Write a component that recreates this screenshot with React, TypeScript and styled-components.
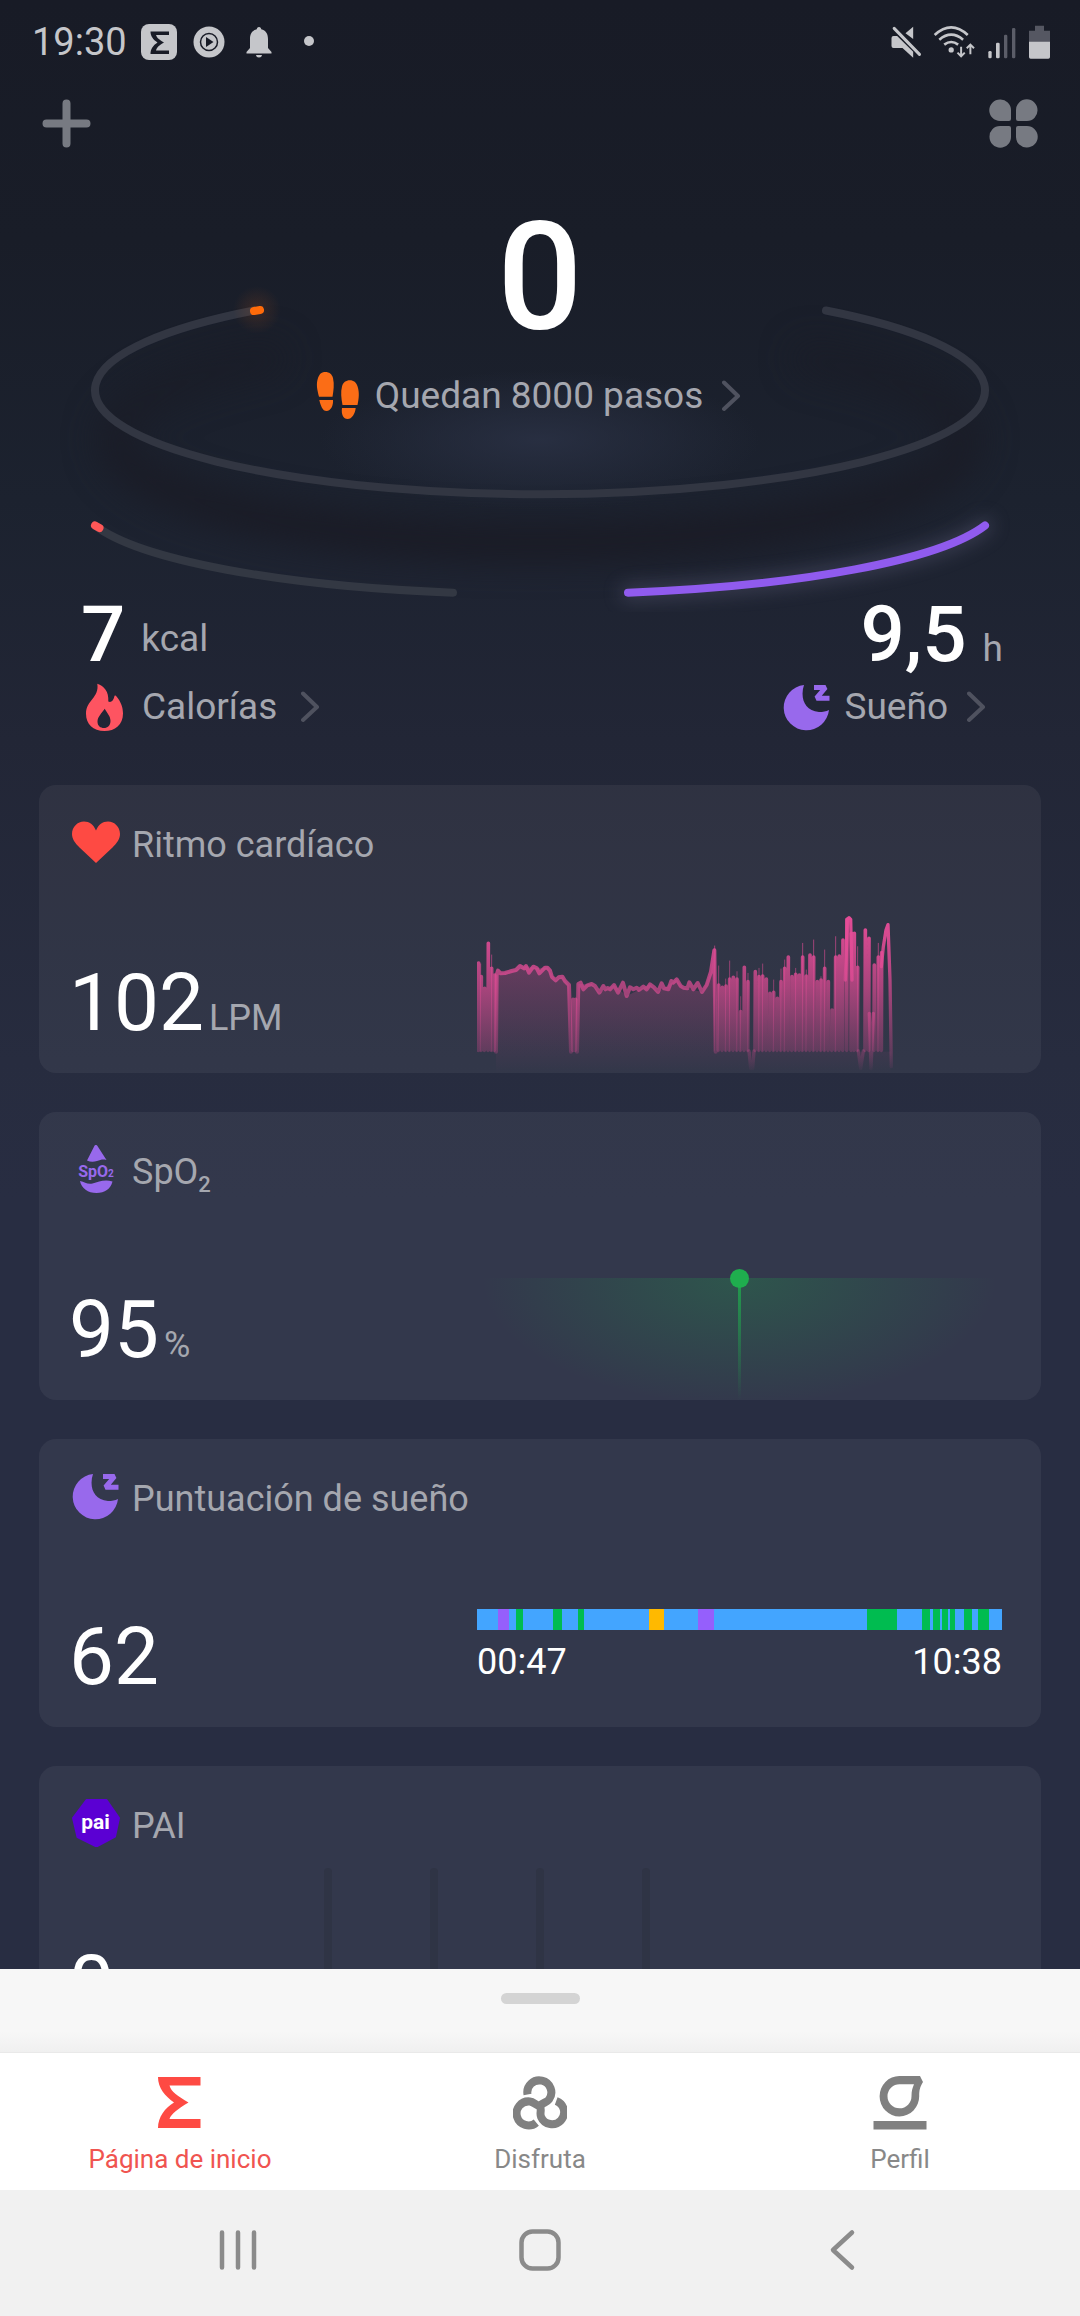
import React from "react";
import styled, { createGlobalStyle } from "styled-components";

const colors = {
  muted: "#a5a7af",
  status: "#c5c6ca",
  purple: "#9869ec",
  orange: "#fb6d16",
  red: "#fe4a43",
  green: "#00bc50",
  blue: "#43a5ff",
  yellow: "#ffb900",
  violet: "#955ffc",
};

const GlobalStyle = createGlobalStyle`
  *, *::before, *::after { box-sizing: border-box; }
  body { margin: 0; font-family: Roboto, "Liberation Sans", sans-serif; background: #282d42; }
  button { font: inherit; color: inherit; background: none; border: 0; padding: 0; cursor: pointer; }
  a { color: inherit; text-decoration: none; }
  h2, p { margin: 0; font-weight: 400; }
  svg { display: block; flex: none; }
`;

const Screen = styled.div`
  height: 100vh;
  display: flex;
  flex-direction: column;
`;

const Content = styled.main`
  flex: 1;
  min-height: 0;
  overflow-y: auto;
  scrollbar-width: none;
  background: linear-gradient(#181b26 0, #191d28 240px, #1c222f 500px, #222636 740px, #272c3f 1060px, #282d42 1200px);
`;

const StatusBar = styled.div`
  height: 84px;
  padding: 0 29px 0 32px;
  display: flex;
  justify-content: space-between;
  align-items: center;
  color: ${colors.status};
`;

const StatusGroup = styled.div<{ $gap: number }>`
  display: flex;
  align-items: center;
  gap: ${(p) => p.$gap}px;
`;

const Clock = styled.span`
  font-size: 38px;
  line-height: 48px;
`;

const Toolbar = styled.header`
  height: 78px;
  padding: 0 42px;
  display: flex;
  justify-content: space-between;
  align-items: center;
  color: #777a82;
`;

const Hero = styled.section`
  display: grid;
  & > * {
    grid-area: 1 / 1;
  }
`;

const Rings = styled.svg`
  width: 100%;
  height: 450px;
`;

const Summary = styled.div`
  display: flex;
  flex-direction: column;
  align-items: center;
  padding-top: 28px;
`;

const StepCount = styled.p`
  font-size: 150px;
  line-height: 176px;
  font-weight: 500;
  color: #fff;
`;

const MetricLink = styled.a<{ $gap: number }>`
  display: flex;
  align-items: center;
  font-size: 37px;
  line-height: 48px;
  color: ${colors.muted};
  & > span {
    margin: 0 ${(p) => p.$gap}px 0 13px;
  }
`;

const StepsLink = styled(MetricLink)`
  margin-top: 6px;
  padding-right: 8px;
`;

const Stats = styled.div`
  align-self: stretch;
  margin-top: 171px;
  padding: 0 77px 0 81px;
  display: flex;
  justify-content: space-between;
`;

const Stat = styled.div<{ $end?: boolean }>`
  display: flex;
  flex-direction: column;
  align-items: ${(p) => (p.$end ? "flex-end" : "flex-start")};
  gap: 4px;
`;

const StatValue = styled.p`
  display: flex;
  align-items: flex-end;
  gap: 16px;
  font-size: 78px;
  line-height: 88px;
  font-weight: 500;
  color: #fff;
`;

const StatUnit = styled.span<{ $lift: number }>`
  padding-bottom: ${(p) => p.$lift}px;
  font-size: 37px;
  line-height: 48px;
  font-weight: 400;
  color: ${colors.muted};
`;

const Cards = styled.div`
  padding: 54px 39px 39px;
  display: flex;
  flex-direction: column;
  gap: 39px;
`;

const Card = styled.section<{ $columns?: string }>`
  min-height: 288px;
  padding: 33px 39px 0 30px;
  border-radius: 17px;
  overflow: hidden;
  background: rgba(255, 255, 255, 0.055);
  display: grid;
  grid-template-columns: ${(p) => p.$columns ?? "408fr 525fr"};
  grid-template-rows: 52px 1fr;
`;

const CardTitle = styled.h2`
  grid-area: 1 / 1 / 2 / 3;
  display: flex;
  align-items: flex-start;
  gap: 12px;
  padding-left: 3px;
  font-size: 36px;
  line-height: 54px;
  color: ${colors.muted};
  sub {
    font-size: 22px;
    line-height: 1;
    font-weight: 500;
    vertical-align: -8px;
  }
`;

const CardValue = styled.p`
  grid-area: 2 / 1;
  align-self: end;
  padding-bottom: 22px;
  display: flex;
  align-items: baseline;
  gap: 5px;
  font-size: 80px;
  line-height: 96px;
  color: #fff;
  small {
    font-size: 36px;
    line-height: 48px;
    color: ${colors.muted};
  }
`;

const CardChart = styled.div`
  grid-area: 1 / 2 / 3 / 3;
  align-self: end;
  & > svg {
    width: 100%;
  }
`;

const SleepBar = styled.div`
  height: 21px;
  display: flex;
`;

const SleepStage = styled.span<{ $color: string }>`
  background: ${(p) => p.$color};
`;

const SleepTimes = styled.div`
  display: flex;
  justify-content: space-between;
  padding: 8px 0 41px;
  font-size: 36px;
  line-height: 48px;
  color: #fff;
`;

const PaiBars = styled.div`
  height: 186px;
  display: flex;
  gap: 98px;
`;

const PaiBar = styled.span`
  width: 8px;
  border-radius: 4px 4px 0 0;
  background: #2f3445;
`;

const Sheet = styled.div`
  flex: none;
  height: 84px;
  padding-top: 24px;
  display: flex;
  justify-content: center;
  background: linear-gradient(#f7f7f7 75%, #f0f0f0);
  border-bottom: 1px solid #e9e9e9;
`;

const SheetHandle = styled.button`
  width: 79px;
  height: 11px;
  && {
    border-radius: 6px;
    background: #d4d4d4;
  }
`;

const Tabs = styled.nav`
  flex: none;
  display: flex;
  padding: 23px 0 15px;
  background: #fff;
`;

const Tab = styled.a<{ $active?: boolean }>`
  flex: 1;
  display: flex;
  flex-direction: column;
  align-items: center;
  gap: 13px;
  font-size: 26px;
  line-height: 32px;
  color: ${(p) => (p.$active ? "#f05450" : "#888")};
`;

const SystemBar = styled.div`
  flex: none;
  height: 126px;
  padding: 0 8% 6px;
  display: flex;
  align-items: center;
  background: #f1f1f1;
`;

const SystemButton = styled.button`
  flex: 1;
  height: 100%;
  display: flex;
  align-items: center;
  justify-content: center;
`;

const Chevron = () => (
  <svg width="36" height="32" viewBox="0 0 36 32" fill="none" stroke="#4f525f" strokeWidth="4" strokeLinecap="round" strokeLinejoin="round">
    <path d="M2 2.500 16 16 2 29" />
  </svg>
);

const FootprintsIcon = () => (
  <svg width="48" height="48" viewBox="0 0 48 48" fill={colors.orange}>
    <path d="M5 24.700C3 17 2 12 4 6 5.500 1.500 8 0 11.500 0s6.500 2 7.500 6c1.500 6 .5 13-.5 18.700ZM5.300 28H19c.5 5-2 11-6.500 11-4 0-5.700-5-7.200-11Z" />
    <path d="M28.500 33C27.300 26 26.500 20 28 14.500c1-4 4-6.200 7.800-6.200 4 0 6.500 2.200 7.800 6.200C45.500 20.500 45 26 43.500 33ZM28 36h13.700C41 42 38 47 33.500 47 29.500 47 27 42.500 28 36Z" />
  </svg>
);

const FlameIcon = () => (
  <svg width="48" height="48" viewBox="0 0 48 48" fill="#fe5461" fillRule="evenodd">
    <path d="M16.300.8C23 3 28 8.500 27.300 18.500c2.500 1.500 5.200-.5 6.200-5.500.5-.8 1.300-.6 2 .4C40 19 42 24 42 30.500 42 42 34 48 23.500 48 12 48 5 41 5 30.700 5 17 18.500 15 16.300.8ZM23.700 25.700C21 30 16.500 33.500 16.500 38.500c0 4.500 3 6.500 6.500 6.500s6.500-2.500 6.500-7c0-5-3.500-8-5.800-12.300Z" />
  </svg>
);

const MoonIcon = () => (
  <svg width="48" height="48" viewBox="0 0 48 48">
    <path fill={colors.purple} d="M21 2C17 14 21 28 36 29c4 0 7-.6 10-2A22.700 22.700 0 1 1 21 2Z" />
    <path d="M31 4.500h11.500L33.500 15.200h13" fill="none" stroke={colors.purple} strokeWidth="5" strokeLinejoin="bevel" />
  </svg>
);

const HeartIcon = () => (
  <svg width="48" height="48" viewBox="0 0 48 48">
    <path fill={colors.red} d="M24 45 7.500 29.500C3 25 0 21 0 16 0 9 5.500 3.500 12 3.500c5.500 0 9.500 3 12 9 2.500-6 6.500-9 12-9C42.500 3.500 48 9 48 16c0 5-3 9-7.500 13.500Z" />
  </svg>
);

const OxygenIcon = () => (
  <svg width="48" height="48" viewBox="0 0 48 48" fill={colors.purple}>
    <path d="M22.500.7c.8-1 2-1 2.800 0L34.500 15c-4-1-6 0-9.500 1-4 1.200-7 .8-10-.5ZM8 36c5 1 7 3.500 12.500 2.500C27 37 32 34 40.500 36.500 38.500 44 33 48 24.500 48S9.500 43.500 8 36Z" />
    <text x="24" y="32" textAnchor="middle" fontSize="16" fontWeight="700">
      SpO<tspan fontSize="10">2</tspan>
    </text>
  </svg>
);

const PaiIcon = () => (
  <svg width="48" height="48" viewBox="0 0 48 48">
    <path fill="#5b00d3" stroke="#5b00d3" strokeWidth="2" strokeLinejoin="round" d="M14.500 1h20L47 19l-4 18.500L24.500 47.500 5.500 38 1 19Z" />
    <text x="23.500" y="30" textAnchor="middle" fontSize="21" fontWeight="700" fill="#fff">pai</text>
  </svg>
);

const RingsDrawing = () => (
  <Rings viewBox="0 162 1080 450" aria-hidden="true" fill="none" strokeWidth="8" strokeLinecap="round">
    <defs>
      <filter id="soft" x="0" y="250" width="1080" height="362" filterUnits="userSpaceOnUse" colorInterpolationFilters="sRGB">
        <feGaussianBlur stdDeviation="16" />
      </filter>
      <filter id="glow" x="500" y="440" width="580" height="172" filterUnits="userSpaceOnUse" colorInterpolationFilters="sRGB">
        <feGaussianBlur stdDeviation="9" />
      </filter>
      <radialGradient id="centre">
        <stop offset="0" stopColor="#2b3246" stopOpacity="0.8" />
        <stop offset="1" stopColor="#2b3246" stopOpacity="0" />
      </radialGradient>
      <radialGradient id="spark">
        <stop offset="0" stopColor="#fb6d16" stopOpacity="0.14" />
        <stop offset="1" stopColor="#fb6d16" stopOpacity="0" />
      </radialGradient>
      <linearGradient id="shade" gradientUnits="userSpaceOnUse" x1="0" y1="340" x2="0" y2="540">
        <stop offset="0" stopColor="#1a1b25" stopOpacity="0.4" />
        <stop offset="1" stopColor="#1a1b25" stopOpacity="1" />
      </linearGradient>
    </defs>
    <path d="M270 358A425 104 0 1 0 810 358" stroke="url(#shade)" strokeWidth="38" filter="url(#soft)" />
    <ellipse cx="540" cy="440" rx="220" ry="70" fill="url(#centre)" />
    <path d="M254 310.500A445 104 0 1 0 826 310.500" stroke="#323642" />
    <circle cx="257" cy="310" r="24" fill="url(#spark)" />
    <path d="M254 311 260 310" stroke="#ff6b0a" />
    <path d="M95 525.500A460 92 0 0 0 453 592.700" stroke="#333843" />
    <path d="M95 525.500 99.500 528" stroke="#ff5757" />
    <path d="M985 525.500A460 92 0 0 1 628 592.700" stroke="#8a86b0" strokeOpacity="0.25" strokeWidth="16" filter="url(#glow)" />
    <path d="M985 525.500A460 92 0 0 1 628 592.700" stroke="#905bee" />
  </Rings>
);

const heartLine =
  "M138 515 140 285 144 272 152 280 165 279 185 273 198 270 210 258 222 265 228 258 237 278 250 260 260 264 268 280 285 263 292 263 300 272 306 291 317 301 326 292 337 290 345 303 357 315 363 515M381 515 385 312 392 308 400 328 412 316 425 312 435 318 448 338 460 318 466 328 473 324 480 328 492 315 504 338 519 308 530 348 540 322 550 328 560 323 567 330 580 320 590 328 600 313 612 322 624 336 635 310 642 325 655 328 664 303 670 308 680 298 692 318 700 323 712 325 718 307 730 328 743 309 756 336 770 315 783 275 793 211 797 515";

const heartFill =
  "M138 579V285L152 280 198 270 228 258 260 264 292 263 317 301 337 290 357 315 363 515H381L385 312 425 312 448 338 492 315 530 348 600 313 624 336 680 298 700 323 756 336 783 275 793 211V515H1324V579Z";

const heartBars: [number, number][] = [
  [85, 249], [93, 290], [103, 325], [114, 190], [124, 265], [133, 285], [368, 358], [376, 358],
  [805, 315], [816, 322], [827, 318], [838, 297], [849, 292], [860, 297], [871, 395], [882, 262], [893, 305],
  [915, 275], [926, 290], [937, 288], [948, 297], [959, 340], [970, 337], [981, 355], [992, 305], [1003, 265],
  [1014, 231], [1025, 290], [1036, 283], [1047, 285], [1057, 231], [1068, 288], [1079, 225], [1090, 231],
  [1101, 305], [1112, 300], [1123, 265], [1134, 305], [1145, 390], [1156, 231], [1167, 228], [1178, 180],
  [1190, 118], [1203, 160], [1212, 160], [1222, 262], [1245, 150], [1256, 175], [1272, 255], [1284, 231], [1294, 218],
];

const heartSpikes: [number, number][] = [
  [91, 252], [124, 225], [793, 198], [805, 258], [826, 297], [838, 243], [860, 275], [871, 350], [893, 280],
  [926, 265], [937, 252], [970, 300], [992, 267], [1003, 240], [1036, 265], [1057, 190], [1068, 270], [1090, 180],
  [1112, 290], [1123, 210], [1156, 170], [1222, 200], [1284, 190],
];

const HeartChart = () => (
  <svg height="166" viewBox="81 81 1575 498" preserveAspectRatio="none" role="img" aria-label="Ritmo cardíaco" fill="none">
    <defs>
      <linearGradient id="pinkLine" gradientUnits="userSpaceOnUse" x1="0" y1="110" x2="0" y2="579">
        <stop offset="0" stopColor="#e54c97" />
        <stop offset="0.450" stopColor="#e54c97" stopOpacity="0.66" />
        <stop offset="0.860" stopColor="#e54c97" stopOpacity="0.26" />
        <stop offset="1" stopColor="#e54c97" stopOpacity="0" />
      </linearGradient>
      <linearGradient id="pinkFill" gradientUnits="userSpaceOnUse" x1="0" y1="110" x2="0" y2="579">
        <stop offset="0" stopColor="#e54c97" stopOpacity="0.42" />
        <stop offset="1" stopColor="#e54c97" stopOpacity="0" />
      </linearGradient>
    </defs>
    <path d={heartFill} fill="url(#pinkFill)" />
    <g stroke="url(#pinkLine)" strokeLinejoin="round" strokeLinecap="round">
      <path strokeWidth="12" d={heartLine} />
      <path strokeWidth="11" d={heartBars.map(([x, y]) => `M${x} 511 ${x + 1} ${y}`).join("")} />
      <path strokeWidth="3" strokeOpacity="0.7" d={heartSpikes.map(([x, y]) => `M${x} 513 ${x + 1} ${y}`).join("")} />
      <path strokeWidth="10" d="M897 513 902 566 908 566 912 513M1186 300 1192 118 1197 113 1202 118 1206 300M1225 513 1232 566 1240 513M1258 400 1263 566 1270 400M1294 260 1300 200 1308 150 1314 134 1320 300 1324 560" />
    </g>
  </svg>
);

const OxygenChart = () => (
  <svg height="132" viewBox="0 0 525 132" role="img" aria-label="SpO₂">
    <defs>
      <radialGradient id="greenGlow" gradientUnits="userSpaceOnUse" cx="0" cy="0" r="1" gradientTransform="translate(262.500 11) scale(258 126)">
        <stop offset="0" stopColor="#1fae4e" stopOpacity="0.25" />
        <stop offset="1" stopColor="#1fae4e" stopOpacity="0" />
      </radialGradient>
      <linearGradient id="greenStem" x1="0" y1="0" x2="0" y2="1">
        <stop offset="0" stopColor="#1fae4e" stopOpacity="0.8" />
        <stop offset="1" stopColor="#1fae4e" stopOpacity="0" />
      </linearGradient>
    </defs>
    <rect x="0" y="10" width="525" height="122" fill="url(#greenGlow)" />
    <rect x="261" y="11" width="3" height="121" fill="url(#greenStem)" />
    <circle cx="262.500" cy="10.500" r="9.500" fill="#1fae4e" />
  </svg>
);

const sleepStages: [number, string][] = [
  [31, colors.blue], [17, colors.violet], [11, colors.blue], [11, colors.green], [45, colors.blue],
  [13, colors.green], [25, colors.blue], [9, colors.green], [98, colors.blue], [22, colors.yellow],
  [52, colors.blue], [23, colors.violet], [231, colors.blue], [45, colors.green], [38, colors.blue],
  [13, colors.green], [4, colors.blue], [11, colors.green], [3, colors.blue], [9, colors.green],
  [2, colors.blue], [8, colors.green], [14, colors.blue], [11, colors.green], [9, colors.blue],
  [17, colors.green], [20, colors.blue],
];

const SigmaIcon = () => (
  <svg width="54" height="54" viewBox="0 0 54 54" fill={colors.red}>
    <path d="M5 1H47.500V9.500H16.500C18 16 25 20 35.500 26.500 25 33 18 38 16.500 43H47.500V52H5C5 41 12 32 21 26.500 12 20 5 12 5 1Z" />
  </svg>
);

const LoopsIcon = () => (
  <svg width="54" height="54" viewBox="0 0 54 54" fill="none" stroke="#808080" strokeWidth="8">
    {[0, 120, 240].map((angle) => (
      <path key={angle} transform={`rotate(${angle} 27 30)`} d="M14.500 18.500A12 12 0 1 1 36 23.500C33.500 27 30 26 27 30" />
    ))}
  </svg>
);

const ProfileIcon = () => (
  <svg width="54" height="54" viewBox="0 0 54 54" fill="#808080" fillRule="evenodd">
    <path d="M26.500 0H47L50 6C47 11 46.200 14 46.200 20A19.800 20.200 0 1 1 26.500 0ZM27 8.300A12 12 0 1 0 38.500 20C38.500 15 39.500 12 41 8.300Z" />
    <path d="M.5 45H53.500V53.500H.5Z" />
  </svg>
);

export default function App() {
  return (
    <>
      <GlobalStyle />
      <Screen>
        <Content>
          <StatusBar>
            <StatusGroup $gap={14}>
              <Clock>19:30</Clock>
              <svg width="36" height="36" viewBox="0 0 36 36">
                <rect width="36" height="36" rx="8" fill={colors.status} />
                <path fill="#181b26" d="M9.500 7.500H28V11H15C16 14 18 15.500 23 18.500 18 21.500 16 23 15 26.500H28V30H9.500C9.500 25 12 21.500 16.500 18.500 12 15.500 9.500 12 9.500 7.500Z" />
              </svg>
              <svg width="36" height="36" viewBox="0 0 36 36">
                <circle cx="18" cy="18" r="15.500" fill={colors.status} />
                <circle cx="18" cy="18" r="8.500" fill="none" stroke="#181b26" strokeWidth="1.500" />
                <path d="M15 13 22.500 18 15 23Z" fill="#181b26" />
              </svg>
              <svg width="36" height="36" viewBox="0 0 36 36" fill={colors.status}>
                <path d="M18 3c1.500 0 2.200 1 2.200 2.300C25 6.500 27 10 27 15v9l3.500 4v1.500h-25V28L9 24v-9c0-5 2-8.500 6.800-9.700C15.800 4 16.500 3 18 3ZM15 31h6c-.3 1.700-1.300 2.500-3 2.500s-2.700-.8-3-2.500Z" />
              </svg>
              <svg width="36" height="36" viewBox="0 0 36 36">
                <circle cx="18" cy="17" r="5" fill={colors.status} />
              </svg>
            </StatusGroup>
            <StatusGroup $gap={11}>
              <svg width="31" height="34" viewBox="278 70 92 102" fill={colors.status}>
                <path d="M344 75V112L321 95ZM285 103H296L344 150V168L312 139H285Q279 139 279 133V109Q279 103 285 103Z" />
                <path d="M287 80 363 158" stroke={colors.status} strokeWidth="9" strokeLinecap="round" />
              </svg>
              <svg width="43" height="34" viewBox="402 70 130 102" fill="none" stroke={colors.status} strokeWidth="8">
                <path d="M407 100Q457 54 507 100M421 114Q457 84 493 114M436 129Q457 113 478 129" />
                <circle cx="457" cy="145" r="4" />
                <path strokeWidth="6" d="M487 135V165M476 153 487 164 498 153M515 158V129M504 140 515 129 526 140" />
              </svg>
              <svg width="30" height="34" viewBox="560 70 90 102" fill={colors.status}>
                <rect x="564" y="148" width="10" height="22" rx="4" />
                <rect x="587" y="123" width="11" height="47" rx="4" />
                <rect x="611" y="99" width="10" height="71" rx="4" fill="#5b5d68" />
                <rect x="635" y="79" width="10" height="91" rx="4" fill="#5b5d68" />
              </svg>
              <svg width="23" height="34" viewBox="684 70 69 102">
                <path fill="#555762" d="M705 72h27v15h18v34h-63V87h18Z" />
                <path fill={colors.status} d="M687 120h63v46q0 5-5 5h-53q-5 0-5-5Z" />
              </svg>
            </StatusGroup>
          </StatusBar>

          <Toolbar>
            <button aria-label="Añadir">
              <svg width="49" height="49" viewBox="0 0 49 49" fill="none" stroke="currentColor" strokeWidth="8" strokeLinecap="round">
                <path d="M24.500 4.500v40M4.500 24.500h40" />
              </svg>
            </button>
            <button aria-label="Aplicaciones">
              <svg width="49" height="49" viewBox="0 0 49 49" fill="currentColor">
                {[0, 90, 180, 270].map((angle) => (
                  <path key={angle} transform={`rotate(${angle} 24.500 24.500)`} d="M11 0.500A10.500 10.500 0 0 1 22 11V20Q22 22 20 22H11A10.700 10.700 0 0 1 11 0.500Z" />
                ))}
              </svg>
            </button>
          </Toolbar>

          <Hero>
            <RingsDrawing />
            <Summary>
              <StepCount>0</StepCount>
              <StepsLink href="#pasos" $gap={19}>
                <FootprintsIcon />
                <span>Quedan 8000 pasos</span>
                <Chevron />
              </StepsLink>
              <Stats>
                <Stat>
                  <StatValue>
                    7 <StatUnit $lift={16}>kcal</StatUnit>
                  </StatValue>
                  <MetricLink href="#calorias" $gap={24}>
                    <FlameIcon />
                    <span>Calorías</span>
                    <Chevron />
                  </MetricLink>
                </Stat>
                <Stat $end>
                  <StatValue>
                    9,5 <StatUnit $lift={6}>h</StatUnit>
                  </StatValue>
                  <MetricLink href="#sueno" $gap={19}>
                    <MoonIcon />
                    <span>Sueño</span>
                    <Chevron />
                  </MetricLink>
                </Stat>
              </Stats>
            </Summary>
          </Hero>

          <Cards>
            <Card>
              <CardTitle><HeartIcon />Ritmo cardíaco</CardTitle>
              <CardValue>102<small>LPM</small></CardValue>
              <CardChart><HeartChart /></CardChart>
            </Card>
            <Card>
              <CardTitle>
                <OxygenIcon />
                <span>SpO<sub>2</sub></span>
              </CardTitle>
              <CardValue>95<small>%</small></CardValue>
              <CardChart><OxygenChart /></CardChart>
            </Card>
            <Card>
              <CardTitle><MoonIcon />Puntuación de sueño</CardTitle>
              <CardValue>62</CardValue>
              <CardChart>
                <SleepBar>
                  {sleepStages.map(([length, color], i) => (
                    <SleepStage key={i} $color={color} style={{ flexGrow: length }} />
                  ))}
                </SleepBar>
                <SleepTimes>
                  <span>00:47</span>
                  <span>10:38</span>
                </SleepTimes>
              </CardChart>
            </Card>
            <Card $columns="255px 1fr">
              <CardTitle><PaiIcon />PAI</CardTitle>
              <CardValue>0</CardValue>
              <CardChart>
                <PaiBars>
                  <PaiBar />
                  <PaiBar />
                  <PaiBar />
                  <PaiBar />
                </PaiBars>
              </CardChart>
            </Card>
          </Cards>
        </Content>

        <Sheet>
          <SheetHandle aria-label="Abrir panel" />
        </Sheet>
        <Tabs>
          <Tab href="#inicio" $active><SigmaIcon />Página de inicio</Tab>
          <Tab href="#disfruta"><LoopsIcon />Disfruta</Tab>
          <Tab href="#perfil"><ProfileIcon />Perfil</Tab>
        </Tabs>
        <SystemBar>
          <SystemButton aria-label="Recientes">
            <svg width="42" height="42" viewBox="0 0 42 42" stroke="#8b8b8b" strokeWidth="4.500" strokeLinecap="round">
              <path d="M5 3.500v35M21 3.500v35M37 3.500v35" />
            </svg>
          </SystemButton>
          <SystemButton aria-label="Inicio">
            <svg width="42" height="42" viewBox="0 0 42 42" fill="none" stroke="#8b8b8b" strokeWidth="4.500">
              <rect x="2.500" y="2.500" width="37" height="37" rx="11" />
            </svg>
          </SystemButton>
          <SystemButton aria-label="Atrás">
            <svg width="42" height="42" viewBox="0 0 42 42" fill="none" stroke="#8b8b8b" strokeWidth="4.500" strokeLinecap="round" strokeLinejoin="round">
              <path d="M31 3.500 12 21 31 38.500" />
            </svg>
          </SystemButton>
        </SystemBar>
      </Screen>
    </>
  );
}
